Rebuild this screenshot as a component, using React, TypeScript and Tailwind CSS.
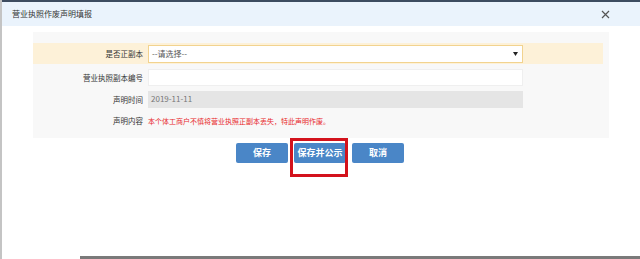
const font = { fontFamily: '"Noto Sans CJK SC", "Noto Sans", sans-serif' };

const Label = ({ children }: { children: React.ReactNode }) => (
  <div className="w-[115px] shrink-0 pr-[5px] text-right text-[7.5px] text-[#333]">{children}</div>
);

const App = () => {
  return (
    <div className="relative h-[259px] w-[640px] overflow-hidden bg-white" style={font}>
      {/* window frame */}
      <div className="flex h-full flex-col border-l-[2px] border-[#c4c4c4]">
        <div className="h-[2px] bg-[#3d4c60]" />
        <div className="flex h-[24px] items-center justify-between bg-[#eaf3fc] pl-[10px] pr-[30px]">
          <span className="text-[8px] text-[#333]">营业执照作废声明填报</span>
          <svg width="9" height="9" viewBox="0 0 9 9" className="text-[#555]">
            <path d="M1 1L8 8M8 1L1 8" stroke="currentColor" strokeWidth="1.2" />
          </svg>
        </div>

        <div className="pl-[31px] pt-[6px]">
          {/* form panel */}
          <div className="w-[576px] bg-[#f8f8f8] pb-[6.5px] pt-[11px]">
            <div className="flex flex-col pr-[6px]">
              <div className="mb-[3px] flex h-[21px] items-center bg-[#fdf1d8]">
                <Label>是否正副本</Label>
                <div className="flex h-[18px] w-[375px] items-center justify-between border border-[#f2d38f] bg-white pl-[3px] pr-[4px]">
                  <span className="text-[8px] text-[#555]">--请选择--</span>
                  <svg width="5" height="4" viewBox="0 0 5 4">
                    <path d="M0 0H5L2.5 4Z" fill="#222" />
                  </svg>
                </div>
              </div>

              <div className="flex h-[21.5px] items-center">
                <Label>营业执照副本编号</Label>
                <div className="h-[17px] w-[375px] border border-[#efefef] bg-white" />
              </div>

              <div className="flex h-[21.5px] items-center">
                <Label>声明时间</Label>
                <div className="flex h-[17px] w-[375px] items-center bg-[#e5e5e5] pl-[3px] text-[8px] text-[#777]">
                  2019-11-11
                </div>
              </div>

              <div className="flex h-[21.5px] items-center">
                <Label>声明内容</Label>
                <span className="text-[7px] text-[#e8292b]">本个体工商户不慎将营业执照正副本丢失，特此声明作废。</span>
              </div>
            </div>
          </div>
        </div>

        {/* buttons */}
        <div className="mt-[5px] flex justify-center gap-[6px] pr-[2px]">
          <button className="h-[20px] w-[52px] rounded-[2px] bg-[#4a86c7] text-[9px] font-semibold text-white">保存</button>
          <button className="h-[20px] w-[52px] rounded-[2px] bg-[#4a86c7] text-[9px] font-semibold text-white">保存并公示</button>
          <button className="h-[20px] w-[52px] rounded-[2px] bg-[#4a86c7] text-[9px] font-semibold text-white">取消</button>
        </div>
      </div>

      {/* red highlight box */}
      <div className="absolute left-[290px] top-[138px] h-[39px] w-[58px] border-[3px] border-[#d3121c]" />

      {/* underlying window edge */}
      <div className="absolute bottom-0 left-[80px] h-[3px] w-[560px] bg-[#7a7a7a]" />
    </div>
  );
};

export default App;
